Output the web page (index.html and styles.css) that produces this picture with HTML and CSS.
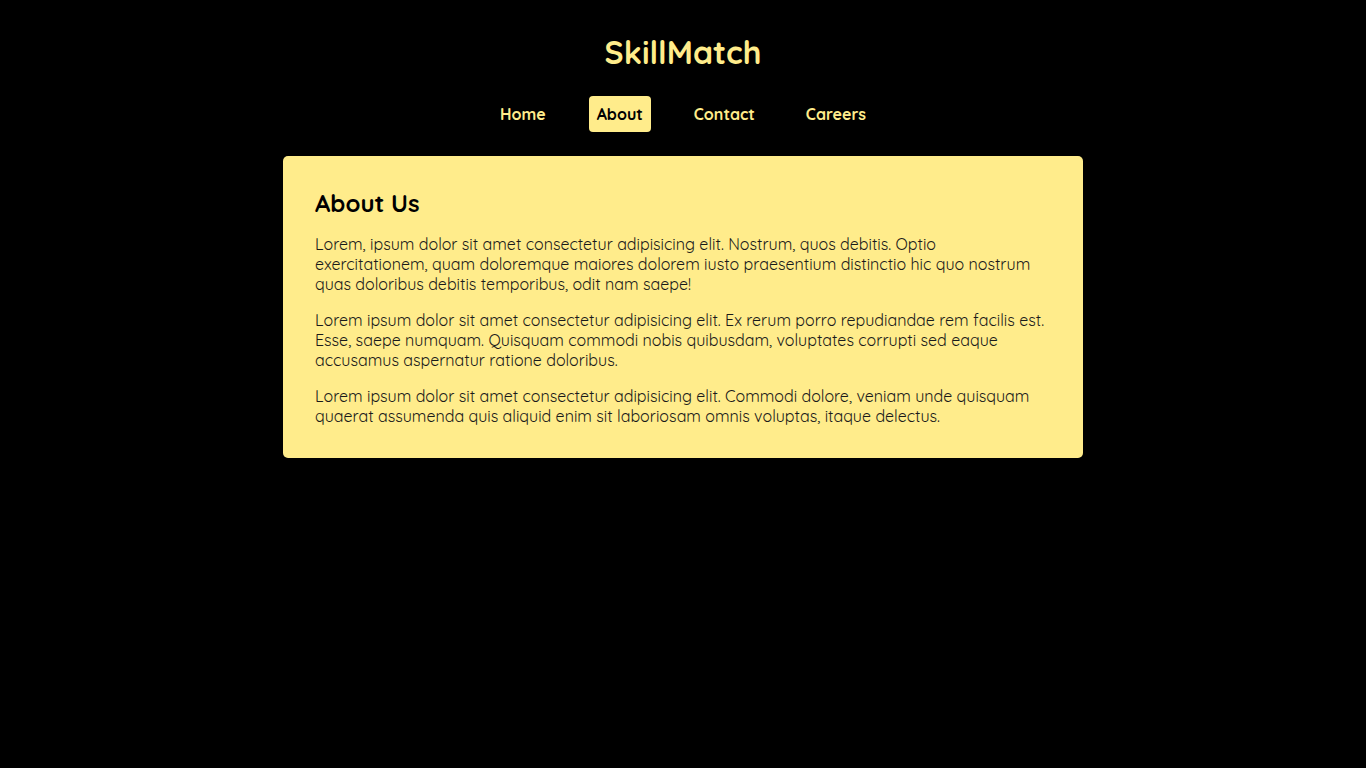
FILE: index.html
```html
<!DOCTYPE html>
<html lang="en">
<head>
<meta charset="utf-8">
<title>SkillMatch - About</title>
<link rel="stylesheet" href="styles.css">
</head>
<body>
<header class="site-header">
  <h1 class="logo">SkillMatch</h1>
  <nav class="nav">
    <a class="nav-link" href="#">Home</a>
    <a class="nav-link active" href="#">About</a>
    <a class="nav-link" href="#">Contact</a>
    <a class="nav-link" href="#">Careers</a>
  </nav>
</header>
<main class="content">
  <section class="card">
    <h2 class="card-title">About Us</h2>
    <p>Lorem, ipsum dolor sit amet consectetur adipisicing elit. Nostrum, quos debitis. Optio exercitationem, quam doloremque maiores dolorem iusto praesentium distinctio hic quo nostrum quas doloribus debitis temporibus, odit nam saepe!</p>
    <p>Lorem ipsum dolor sit amet consectetur adipisicing elit. Ex rerum porro repudiandae rem facilis est. Esse, saepe numquam. Quisquam commodi nobis quibusdam, voluptates corrupti sed eaque accusamus aspernatur ratione doloribus.</p>
    <p>Lorem ipsum dolor sit amet consectetur adipisicing elit. Commodi dolore, veniam unde quisquam quaerat assumenda quis aliquid enim sit laboriosam omnis voluptas, itaque delectus.</p>
  </section>
</main>
</body>
</html>
```

FILE: styles.css
```css
* { box-sizing: border-box; }

body {
  margin: 0;
  background: #000;
  font-family: Quicksand, Lato, "Noto Sans", sans-serif;
  color: #1a1a1a;
}

.site-header {
  display: flex;
  flex-direction: column;
  align-items: center;
  padding-top: 32px;
}

.logo {
  margin: 0;
  font-size: 32px;
  line-height: 40px;
  font-weight: 700;
  color: #ffec8b;
}

.nav {
  display: flex;
  gap: 35px;
  margin-top: 24px;
}

.nav-link {
  display: block;
  padding: 8px;
  font-size: 16px;
  line-height: 20px;
  font-weight: 700;
  color: #ffec8b;
  text-decoration: none;
  border-radius: 4px;
}

.nav-link.active {
  background: #ffec8b;
  color: #000;
}

.content {
  display: flex;
  justify-content: center;
  padding-top: 24px;
}

.card {
  width: 800px;
  background: #ffec8b;
  border-radius: 5px;
  padding: 32px;
}

.card-title {
  margin: 0 0 16px;
  font-size: 24px;
  line-height: 30px;
  font-weight: 700;
  color: #000;
}

.card p {
  margin: 0 0 16px;
  font-size: 16px;
  line-height: 20px;
}

.card p:last-child { margin-bottom: 0; }
```
